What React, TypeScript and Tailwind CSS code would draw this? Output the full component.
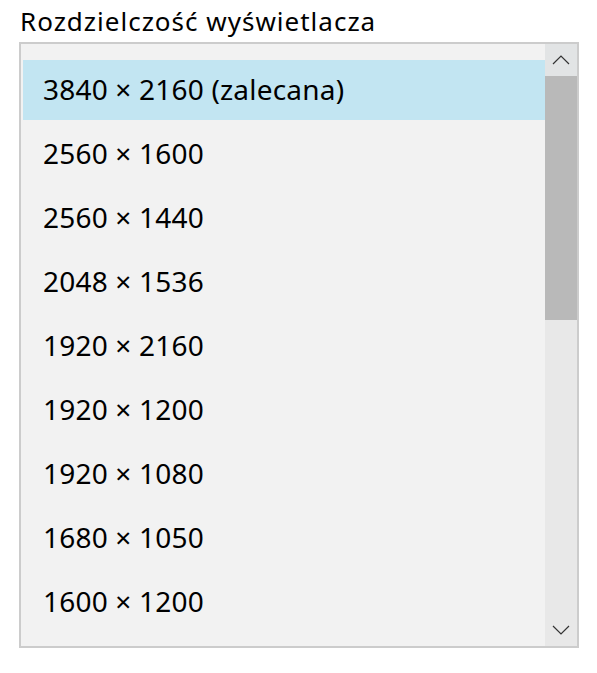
const resolutions = [
  "3840 × 2160 (zalecana)",
  "2560 × 1600",
  "2560 × 1440",
  "2048 × 1536",
  "1920 × 2160",
  "1920 × 1200",
  "1920 × 1080",
  "1680 × 1050",
  "1600 × 1200",
];

export default function App() {
  const font = { fontFamily: '"Noto Sans", "Open Sans", sans-serif' };
  return (
    <div className="w-[597px] h-[673px] bg-white text-black" style={font}>
      <div className="pl-[20px] pt-[6px] h-[42px] text-[26px] leading-[30px] tracking-[1px]">
        Rozdzielczość wyświetlacza
      </div>
      <div className="ml-[19px] w-[560px] h-[606px] border-2 border-[#cccccc] bg-[#f2f2f2] flex overflow-hidden">
        {/* list */}
        <div className="flex-1 pl-[2px] pt-[16px] flex flex-col gap-[4px] overflow-hidden">
          {resolutions.map((r, i) => (
            <div
              key={r}
              className={`shrink-0 h-[60px] flex items-center pl-[20px] pb-[2px] text-[28px] tracking-[0.2px] ${
                i === 0 ? "bg-[#c2e5f2]" : ""
              }`}
            >
              {r}
            </div>
          ))}
        </div>
        {/* scrollbar */}
        <div className="w-[32px] bg-[#e8e8e8] flex flex-col">
          <div className="h-[32px] bg-[#e2e4e5] flex items-center justify-center">
            <svg width="18" height="10" viewBox="0 0 18 10">
              <path d="M1 9 L9 1 L17 9" fill="none" stroke="#333" strokeWidth="1.2" />
            </svg>
          </div>
          <div className="h-[244px] bg-[#b9b9b9]" />
          <div className="flex-1" />
          <div className="h-[32px] flex items-center justify-center">
            <svg width="18" height="10" viewBox="0 0 18 10">
              <path d="M1 1 L9 9 L17 1" fill="none" stroke="#333" strokeWidth="1.2" />
            </svg>
          </div>
        </div>
      </div>
    </div>
  );
}
